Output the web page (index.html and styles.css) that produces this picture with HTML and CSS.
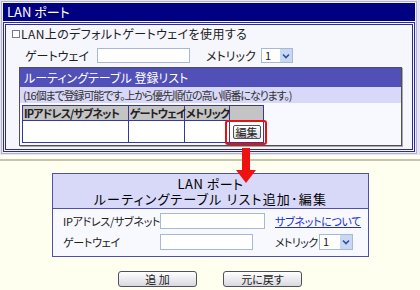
FILE: index.html
```html
<!DOCTYPE html>
<html lang="ja">
<head>
<meta charset="utf-8">
<title>LAN ポート</title>
<link rel="stylesheet" href="styles.css">
</head>
<body>
<div class="page">
  <div class="top">
    <section class="lan">
      <div class="lan-title">LAN ポート</div>
      <div class="lan-body">
        <div class="chk-row"><span class="chk"></span><span class="chk-text">LAN上のデフォルトゲートウェイを使用する</span></div>
        <div class="gw-row">
          <span class="gw-label">ゲートウェイ</span>
          <span class="input gw-input"></span>
          <span class="metric-label">メトリック</span>
          <span class="select"><span class="sel-val">1</span><span class="sel-btn"><svg width="8" height="6" viewBox="0 0 8 6"><path d="M1 1.5 L4 4.5 L7 1.5" fill="none" stroke="#3050a0" stroke-width="1.6"/></svg></span></span>
        </div>
        <div class="rt">
          <div class="rt-head">ルーティングテーブル 登録リスト</div>
          <div class="rt-note">(16個まで登録可能です。上から優先順位の高い順番になります。)</div>
          <div class="rt-body">
            <table class="rt-table">
              <colgroup><col class="c1"><col class="c2"><col class="c3"><col class="c4"></colgroup>
              <tr class="rt-th">
                <th>IPアドレス/サブネット</th>
                <th>ゲートウェイ</th>
                <th>メトリック</th>
                <th></th>
              </tr>
              <tr class="rt-row">
                <td></td><td></td><td></td>
                <td class="btn-cell"><span class="edit-btn">編集</span><span class="hl"></span></td>
              </tr>
            </table>
          </div>
        </div>
      </div>
    </section>
  </div>
  <div class="sep"></div>
  <section class="edit">
    <div class="edit-head">
      <div class="eh1">LAN ポート</div>
      <div class="eh2">ルーティングテーブル リスト追加･編集</div>
    </div>
    <div class="edit-body">
      <span class="lbl">IPアドレス/サブネット</span>
      <span class="cell"><span class="input in-ip"></span></span>
      <a class="link" href="#">サブネットについて</a>
      <span class="lbl">ゲートウェイ</span>
      <span class="cell"><span class="input in-gw"></span></span>
      <span class="metric2"><span class="m2-label">メトリック</span><span class="select sel2"><span class="sel-val">1</span><span class="sel-btn"><svg width="8" height="6" viewBox="0 0 8 6"><path d="M1 1.5 L4 4.5 L7 1.5" fill="none" stroke="#3050a0" stroke-width="1.6"/></svg></span></span></span>
    </div>
  </section>
  <div class="buttons">
    <span class="btn">追 加</span>
    <span class="btn">元に戻す</span>
  </div>
  <svg class="red-arrow" width="22" height="36" viewBox="0 0 22 36"><path d="M6 0 H14 V22 H20 L10 35 L0 22 H6 Z" fill="#ee1111"/></svg>
</div>
</body>
</html>
```

FILE: styles.css
```css
* { box-sizing: border-box; }
html, body { margin: 0; padding: 0; }
body {
  background: #fffff0;
  font-family: "Noto Sans CJK JP", "Liberation Sans", sans-serif;
  font-feature-settings: "palt";
  color: #202020;
  font-size: 12px;
  line-height: 14px;
  white-space: nowrap;
}
.page { position: relative; width: 420px; height: 290px; overflow: hidden; }
.top { background: #e6e6f0; padding: 1px 0 1px 1px; }
.lan {
  width: 416px;
  border: 1px solid #b0b0d0;
  background: #f0f0f8;
  padding: 1px;
}
.lan-title {
  height: 18px;
  background: #000080;
  color: #fff;
  font-size: 13px;
  line-height: 18px;
  padding-left: 4px;
}
.lan-body {
  margin-top: 1px;
  border: 3px double #2a2a9a;
  background: #f6f6fd;
  padding: 2px 6px 3px 6px;
}
.chk-row { height: 14px; display: flex; align-items: center; font-size: 12px; }
.chk-text { letter-spacing: 0.4px; line-height: 14px; }
.chk {
  display: inline-block; width: 8px; height: 8px; flex: none;
  border: 1px solid #7a7a8a; background: #fff; margin-right: 1px;
}
.gw-row { display: flex; align-items: center; height: 15px; margin-top: 7px; font-size: 12px; }
.gw-label { width: 72px; margin-left: 13px; flex: none; }
.input { display: inline-block; background: #fff; border: 1px solid #a8b8d0; height: 15px; flex: none; }
.gw-input { width: 93px; }
.metric-label { margin-left: 16px; width: 55px; flex: none; }
.select {
  display: inline-flex; width: 32px; height: 15px; border: 1px solid #a8b8d0; flex: none;
  background: #fff; font-size: 11px; line-height: 13px;
}
.sel-val { flex: 1; padding-left: 3px; }
.sel-btn {
  width: 12px; background: #c8d8f4; display: flex; align-items: center; justify-content: center;
}
.rt {
  margin: 4px 0 0 7px;
  width: 383px;
  height: 79px;
  border: 1px solid #505050;
  box-shadow: 1px 1px 0 #a8a8a8;
}
.rt-head {
  height: 19px; line-height: 19px; background: #5050b8; color: #fff;
  font-size: 12px; padding-left: 4px;
}
.rt-note {
  height: 16px; line-height: 16px; background: #d8d8f8; font-size: 11px;
  letter-spacing: -1.1px;
  padding-left: 3px; color: #303030;
}
.rt-body { background: #f8f8ff; height: 42px; padding: 2px 2px 0 2px; }
.rt-table { border-collapse: collapse; font-size: 11px; table-layout: fixed; width: 241px; }
.rt-table th, .rt-table td { border: 1px solid #38389a; padding: 0; }
.rt-th th {
  height: 15px; background: #c4c4c4; font-weight: bold; text-align: left;
  padding-left: 1px; line-height: 13px; color: #202020;
  letter-spacing: -0.9px;
}
.c1 { width: 106px; }
.c2 { width: 56px; }
.c3 { width: 45px; }
.c4 { width: 34px; }
.rt-row td { height: 22px; background: #fff; }
.btn-cell { position: relative; }
.edit-btn {
  display: block; margin: 0 auto; width: 28px; height: 14px; line-height: 12px;
  font-size: 11px; text-align: center; border: 1px solid #505060; border-radius: 2px;
  background: linear-gradient(#ffffff, #dcdce4);
}
.hl {
  position: absolute; left: -5px; top: -1px; width: 42px; height: 25px;
  border: 2px solid #e81010; border-radius: 3px;
}
.sep { height: 2px; background: #c8c4b0; margin-top: 4px; }
.edit {
  margin: 12px 0 0 52px; width: 317px; border: 1px solid #5050a8;
}
.edit-head {
  height: 35px; background: #d8d8f8; border-bottom: 1px solid #5050a8;
  text-align: center; line-height: 15px; padding-top: 2px; color: #000;
}
.eh1 { font-size: 13px; height: 15px; letter-spacing: 0.5px; }
.eh2 { font-size: 13px; height: 15px; letter-spacing: 1.2px; }
.edit-body {
  background: #f8f8ff; display: grid; grid-template-columns: 97px 115px 95px;
  grid-template-rows: 16px 16px;
  row-gap: 5px; padding: 4px 0 6px 10px; align-items: center; font-size: 11px;
  line-height: 16px;
}
.lbl { line-height: 16px; letter-spacing: -0.3px; }
.cell { display: flex; }
.in-ip { width: 105px; height: 16px; }
.in-gw { width: 93px; height: 16px; }
.link { color: #2030d0; text-decoration: underline; font-size: 11px; letter-spacing: -0.3px; }
.metric2 { display: flex; align-items: center; }
.m2-label { width: 44px; flex: none; letter-spacing: -0.6px; }
.sel2 { width: 34px; height: 16px; }
.buttons { display: flex; justify-content: center; gap: 26px; margin-top: 14px; }
.btn {
  width: 79px; height: 16px; line-height: 14px; text-align: center; font-size: 11px;
  border: 1px solid #505060; border-radius: 3px; background: linear-gradient(#ffffff, #d8d8e0);
}
.red-arrow { position: absolute; left: 236px; top: 148px; }
```
